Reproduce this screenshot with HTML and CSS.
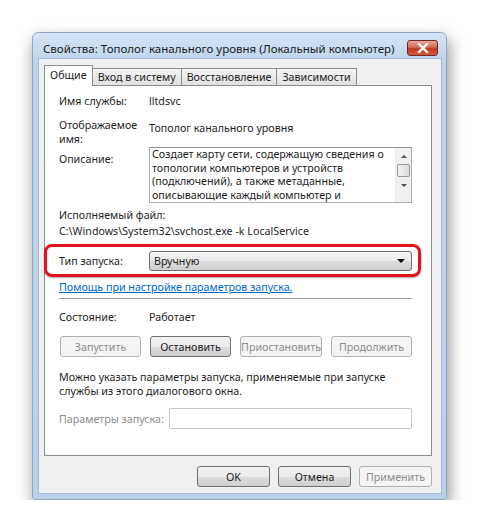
FILE: index.html
```html
<!DOCTYPE html>
<html lang="ru">
<head>
    <meta charset="UTF-8">
    <title>Свойства: Тополог канального уровня</title>
    <link rel="stylesheet" href="styles.css">
</head>
<body>
    <div class="window">
        <div class="titlebar">
            <span class="title">Свойства: Тополог канального уровня (Локальный компьютер)</span>
            <button class="close-btn" aria-label="Закрыть">
                <svg width="12" height="10" viewBox="0 0 12 10">
                    <path d="M2 1 L10 9 M10 1 L2 9" stroke="#fff" stroke-width="2.4" stroke-linecap="square"/>
                </svg>
            </button>
        </div>

        <div class="client">
            <div class="tabs">
                <div class="tab active">Общие</div>
                <div class="tab">Вход в систему</div>
                <div class="tab">Восстановление</div>
                <div class="tab">Зависимости</div>
            </div>

            <div class="panel">
                <div class="row row-name">
                    <span class="label">Имя службы:</span>
                    <span class="value">lltdsvc</span>
                </div>

                <div class="row row-display">
                    <span class="label">Отображаемое<br>имя:</span>
                    <span class="value">Тополог канального уровня</span>
                </div>

                <div class="row row-desc">
                    <span class="label">Описание:</span>
                    <div class="desc-box">
                        <div class="desc-text">Создает карту сети, содержащую сведения о<br>топологии компьютеров и устройств<br>(подключений), а также метаданные,<br>описывающие каждый компьютер и</div>
                        <div class="scrollbar">
                            <span class="arrow up"></span>
                            <span class="thumb"></span>
                            <span class="arrow down"></span>
                        </div>
                    </div>
                </div>

                <div class="exe-label">Исполняемый файл:</div>
                <div class="exe-path">C:\Windows\System32\svchost.exe -k LocalService</div>

                <div class="row row-startup">
                    <span class="label">Тип запуска:</span>
                    <div class="combo">
                        <span>Вручную</span>
                        <span class="combo-arrow"></span>
                    </div>
                </div>

                <a href="#" class="help-link">Помощь при настройке параметров запуска.</a>

                <hr class="separator">

                <div class="row row-state">
                    <span class="label">Состояние:</span>
                    <span class="value">Работает</span>
                </div>

                <div class="service-buttons">
                    <button class="btn" disabled>Запустить</button>
                    <button class="btn">Остановить</button>
                    <button class="btn" disabled>Приостановить</button>
                    <button class="btn" disabled>Продолжить</button>
                </div>

                <p class="hint">Можно указать параметры запуска, применяемые при запуске<br>службы из этого диалогового окна.</p>

                <div class="row row-params">
                    <span class="params-label">Параметры запуска:</span>
                    <div class="params-input"></div>
                </div>
            </div>

            <div class="dialog-buttons">
                <button class="btn">OK</button>
                <button class="btn">Отмена</button>
                <button class="btn" disabled>Применить</button>
            </div>
        </div>
    </div>
</body>
</html>
```

FILE: styles.css
```css
body {
    margin: 0;
    background: #fff;
    font-family: "Noto Sans", "Open Sans", sans-serif;
    font-size: 10.7px;
    color: #1e1e1e;
}

.window {
    margin: 32px 0 0 32px;
    width: 415px;
    height: 468px;
    box-sizing: border-box;
    padding: 0 4px 5px 5px;
    border: 1px solid #8fa6bf;
    border-radius: 6px 6px 3px 3px;
    background: linear-gradient(to bottom, #d6e5f5 0px, #bfd4ec 27px, #b9d0ea 100%);
    box-shadow: 2px 7px 16px rgba(0, 0, 0, 0.45);
    display: flex;
    flex-direction: column;
}

/* Barra de titulo */
.titlebar {
    height: 21px;
    padding-top: 5px;
    display: flex;
    align-items: center;
    justify-content: space-between;
    padding-left: 5px;
}

.title {
    font-size: 11.5px;
    color: #1b1b1b;
    white-space: nowrap;
}

.close-btn {
    width: 31px;
    height: 16px;
    margin-right: 4px;
    padding: 0;
    border: 1px solid #6b2a22;
    border-radius: 3px;
    background: linear-gradient(to bottom, #e7a796 0%, #d46a53 45%, #c0391f 55%, #d35a40 100%);
    display: flex;
    align-items: center;
    justify-content: center;
}

.client {
    flex: 1;
    background: #f0f0f0;
    border: 1px solid #a6b9cf;
    padding: 7px 9px 6px 5px;
    display: flex;
    flex-direction: column;
}

/* Pestañas */
.tabs {
    display: flex;
    align-items: flex-end;
    height: 19px;
    position: relative;
    z-index: 1;
}

.tab {
    height: 17px;
    line-height: 16px;
    padding: 0 5px;
    border: 1px solid #898c95;
    border-bottom: none;
    border-left: none;
    background: linear-gradient(to bottom, #f4f4f4, #e1e1e1);
    box-sizing: border-box;
}

.tab.active {
    height: 21px;
    line-height: 18px;
    margin-bottom: -1px;
    padding: 0 5px;
    background: #fff;
    border-left: 1px solid #898c95;
}

/* Panel */
.panel {
    background: #fff;
    border: 1px solid #898c95;
    height: 371px;
    box-sizing: border-box;
    padding: 8px 19px 0 14px;
    line-height: 14px;
}

.row {
    display: flex;
    align-items: flex-start;
}

.label {
    width: 90px;
    flex-shrink: 0;
}

.row-display {
    margin-top: 10px;
}

.row-display .value {
    margin-top: 3px;
}

.row-desc {
    margin-top: 1px;
}

.row-desc .label {
    margin-top: 5px;
}

.desc-box {
    flex: 1;
    height: 56px;
    border: 1px solid #abadb3;
    border-top-color: #8e8f8f;
    box-sizing: border-box;
    display: flex;
    overflow: hidden;
}

.desc-text {
    flex: 1;
    padding: 0 2px;
    line-height: 13.5px;
    overflow: hidden;
    white-space: nowrap;
}

.scrollbar {
    width: 15px;
    background: #f0f0f0;
    border-left: 1px solid #ececec;
    display: flex;
    flex-direction: column;
    align-items: center;
}

.arrow {
    width: 0;
    height: 0;
    border-left: 3px solid transparent;
    border-right: 3px solid transparent;
    margin: 7px 0 6px;
}

.arrow.up {
    border-bottom: 3px solid #4d4d4d;
}

.arrow.down {
    border-top: 3px solid #4d4d4d;
    margin-top: 7px;
}

.thumb {
    width: 13px;
    height: 13px;
    box-sizing: border-box;
    border: 1px solid #979797;
    border-radius: 2px;
    background: linear-gradient(to right, #f4f4f4, #dcdcdc);
}

.exe-label {
    margin-top: 5px;
}

.exe-path {
    margin-top: 2px;
}

/* Tipo de inicio con marco rojo */
.row-startup {
    margin-top: 13px;
    align-items: center;
    position: relative;
}

.row-startup::before {
    content: "";
    position: absolute;
    top: -7px;
    bottom: -6px;
    left: -15px;
    right: -9px;
    border: 3px solid #e3131b;
    border-radius: 8px;
    box-shadow: 0 1px 2px rgba(0, 0, 0, 0.35);
}

.combo {
    flex: 1;
    height: 20px;
    box-sizing: border-box;
    border: 1px solid #707070;
    border-radius: 3px;
    background: linear-gradient(to bottom, #f2f2f2 0%, #ebebeb 50%, #dddddd 51%, #cfcfcf 100%);
    display: flex;
    align-items: center;
    justify-content: space-between;
    padding: 0 6px 0 4px;
}

.combo-arrow {
    width: 0;
    height: 0;
    border-left: 4px solid transparent;
    border-right: 4px solid transparent;
    border-top: 4px solid #000;
}

.help-link {
    display: block;
    margin-top: 9px;
    color: #0066cc;
    text-decoration: underline;
}

.separator {
    margin: 4px 0 0 0;
    border: none;
    border-top: 1px solid #a0a0a0;
    height: 0;
}

.row-state {
    margin-top: 11px;
}

/* Botones */
.btn {
    font-family: inherit;
    font-size: 10.7px;
    color: #1e1e1e;
    height: 21px;
    padding: 0;
    border: 1px solid #707070;
    border-radius: 3px;
    background: linear-gradient(to bottom, #f2f2f2 0%, #ebebeb 50%, #dddddd 51%, #cfcfcf 100%);
}

.btn:disabled {
    color: #8d8d8d;
    border-color: #adb2b5;
    background: #f4f4f4;
}

.service-buttons {
    display: flex;
    gap: 9px;
    margin-top: 12px;
    padding-left: 1px;
}

.service-buttons .btn {
    flex: 1;
}

.hint {
    margin: 13px 0 0 0;
}

.row-params {
    margin-top: 10px;
    align-items: center;
}

.params-label {
    color: #8d8d8d;
    margin-right: 5px;
    white-space: nowrap;
}

.params-input {
    flex: 1;
    height: 21px;
    box-sizing: border-box;
    border: 1px solid #c7c7c7;
    border-radius: 2px;
    background: #fff;
}

.dialog-buttons {
    display: flex;
    justify-content: flex-end;
    gap: 8px;
    margin-top: 10px;
}

.dialog-buttons .btn {
    width: 73px;
}
```
